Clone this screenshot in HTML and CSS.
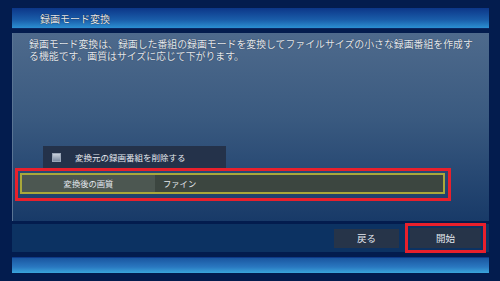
FILE: index.html
```html
<!DOCTYPE html>
<html lang="ja">
<head>
    <meta charset="UTF-8">
    <title>録画モード変換</title>
    <link rel="stylesheet" href="styles.css">
</head>
<body>
    <div class="screen">
        <div class="title-bar">録画モード変換</div>

        <!-- 本体 -->
        <div class="panel">
            <p class="desc">録画モード変換は、録画した番組の録画モードを変換してファイルサイズの小さな録画番組を作成する機能です。画質はサイズに応じて下がります。</p>

            <div class="check-row">
                <span class="checkbox"></span>
                <span>変換元の録画番組を削除する</span>
            </div>

            <div class="focus">
                <div class="setting">
                    <div class="setting-label">変換後の画質</div>
                    <div class="setting-value">ファイン</div>
                </div>
            </div>
        </div>

        <!-- ボタン -->
        <div class="button-bar">
            <div class="btn">戻る</div>
            <div class="btn-focus">
                <div class="btn btn-start">開始</div>
            </div>
        </div>

        <div class="bottom-bar"></div>
    </div>
</body>
</html>
```

FILE: styles.css
```css
html, body {
    margin: 0;
    padding: 0;
}

body {
    width: 500px;
    height: 281px;
    background-color: #031c4e;
    font-family: "Noto Sans CJK JP", "DejaVu Sans", sans-serif;
    color: #e4e8ee;
    overflow: hidden;
}

.screen {
    height: 281px;
    box-sizing: border-box;
    padding: 8px 11px 0 12px;
    border-left: 2px solid #4c5c80;
    margin-left: -2px;
    display: flex;
    flex-direction: column;
}

.title-bar {
    height: 21px;
    line-height: 21px;
    padding-left: 28px;
    font-size: 10px;
    background: linear-gradient(#0c3688, #1a5eaa 60%, #2c90d2);
    border-bottom: 1px solid #0a2660;
    box-sizing: border-box;
    text-shadow: 0 0 1px #000;
}

.panel {
    margin-top: 4px;
    height: 188px;
    box-sizing: border-box;
    background: linear-gradient(#4e6a8c, #3a5a80 45%, #183a68);
    border-left: 1px solid #5a7494;
    padding: 5px 0 20px 0;
    display: flex;
    flex-direction: column;
}

.desc {
    margin: 0;
    padding: 0 10px 0 16px;
    font-size: 9.9px;
    line-height: 12px;
    text-shadow: 0 0 1px #1a2a40;
}

.check-row {
    margin-top: auto;
    margin-left: 30px;
    width: 183px;
    height: 22px;
    background-color: #24324a;
    display: flex;
    align-items: center;
    font-size: 8.5px;
}

.checkbox {
    width: 7px;
    height: 7px;
    margin: 0 14px 0 9px;
    background: linear-gradient(#c8d0dc, #7a8aa0);
    border: 0.5px solid #9aa6b8;
}

.focus {
    margin-left: 2px;
    width: 436px;
    height: 33px;
    box-sizing: border-box;
    border: 3px solid #e8202c;
    padding: 2px 3px 4px 2px;
}

.setting {
    height: 21px;
    box-sizing: border-box;
    border: 2px solid #aaa83a;
    display: flex;
    font-size: 8.3px;
}

.setting-label {
    width: 133px;
    background-color: #4c5751;
    text-align: center;
    line-height: 17px;
}

.setting-value {
    flex: 1;
    background-color: #3c4640;
    padding-left: 8px;
    line-height: 17px;
}

.button-bar {
    margin-top: 3px;
    height: 28px;
    background-color: #0c3262;
    display: flex;
    align-items: center;
    justify-content: flex-end;
    padding-right: 3px;
}

.btn {
    width: 65px;
    height: 19px;
    line-height: 19px;
    background-color: #263449;
    text-align: center;
    font-size: 9.5px;
}

.btn-focus {
    margin-left: 6px;
    width: 81px;
    height: 30px;
    box-sizing: border-box;
    border: 3px solid #e8202c;
    display: flex;
    align-items: center;
    justify-content: center;
}

.btn-start {
    width: 71px;
    height: 20px;
    line-height: 20px;
}

.bottom-bar {
    margin-top: 5px;
    height: 16px;
    background: linear-gradient(#1a56a0, #2a78c0 60%, #3aa6dc);
    border-top: 1px solid #0e3a88;
    box-sizing: border-box;
}
```
